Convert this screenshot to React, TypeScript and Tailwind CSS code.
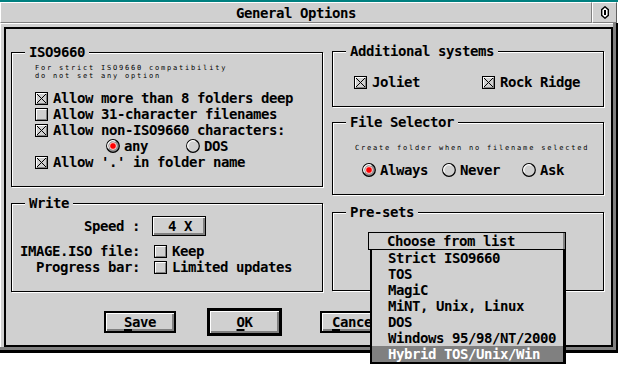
import type { ReactNode } from 'react'

function CheckBox({ checked }: { checked?: boolean }) {
  return (
    <svg width="13" height="13" viewBox="0 0 13 13" shapeRendering="crispEdges" className="shrink-0">
      <rect x="0.5" y="0.5" width="12" height="12" fill="#d0d0d0" stroke="#000" />
      <path d="M1.5 11V1.5H11" stroke="#fff" fill="none" />
      <path d="M2 11.5H11.5V2" stroke="#808080" fill="none" />
      {checked && <path d="M2 2L11 11M11 2L2 11" stroke="#000" shapeRendering="auto" />}
    </svg>
  )
}

function Radio({ on }: { on?: boolean }) {
  return (
    <svg width="14" height="14" viewBox="0 0 14 14" className="shrink-0">
      <circle cx="7" cy="7" r="6.3" fill={on ? '#909090' : '#d0d0d0'} stroke="#000" strokeWidth="1.2" />
      <path d="M2.6 9.5A5 5 0 0 1 9.5 2.6" stroke="#fff" strokeWidth="1.2" fill="none" />
      {on && <circle cx="7" cy="7" r="3.4" fill="#ff0000" stroke="#fff" strokeWidth="0.8" />}
    </svg>
  )
}

function Check({ checked, label, className = '' }: { checked?: boolean; label: string; className?: string }) {
  return (
    <div className={`flex h-[16px] items-center gap-[5px] whitespace-nowrap ${className}`}>
      <CheckBox checked={checked} />
      <span>{label}</span>
    </div>
  )
}

function RadioItem({ on, label, className = '' }: { on?: boolean; label: string; className?: string }) {
  return (
    <div className={`flex h-[16px] items-center gap-[4px] whitespace-nowrap ${className}`}>
      <Radio on={on} />
      <span>{label}</span>
    </div>
  )
}

function Frame({ title, className = '', children }: { title: string; className?: string; children?: ReactNode }) {
  return (
    <div className={`border border-black shadow-[1px_1px_0_#fff,inset_1px_1px_0_#fff] ${className}`}>
      <div className="-mt-[9px] ml-[13px] h-[16px] w-fit bg-[#d0d0d0] px-[4px]">{title}</div>
      {children}
    </div>
  )
}

function Key({ k, rest }: { k: string; rest: string }) {
  return (
    <span>
      <span className="underline decoration-2 underline-offset-[2px]">{k}</span>
      {rest}
    </span>
  )
}

const small = 'text-[7px] font-normal leading-[8px] tracking-[1.79px] whitespace-nowrap'

export default function App() {
  return (
    <div className="relative h-[365px] w-[618px] overflow-hidden bg-white font-['DejaVu_Sans_Mono',monospace] text-[14px] font-bold leading-[16px] tracking-[-0.43px] text-black">
      <div className="h-[2px] bg-[#008080]" />

      {/* title bar */}
      <div className="flex h-[21px]">
        <div className="flex w-[592px] items-center justify-center border border-t-white border-l-white border-b-[#808080] border-r-[#808080] bg-[#d0d0d0]">
          General Options
        </div>
        <div className="flex w-[25px] items-center justify-center border border-t-white border-l-white border-b-[#808080] border-r-[#606060] bg-[#d0d0d0]">
          <svg width="8" height="13" viewBox="0 0 8 13">
            <path d="M4 0.8L7.3 3.6V9.4L4 12.2L0.7 9.4V3.6Z" fill="#fff" stroke="#000" strokeWidth="1.4" />
            <rect x="3" y="4" width="2" height="5" fill="#000" />
          </svg>
        </div>
      </div>

      {/* window body */}
      <div className="h-[330px] w-[618px] border-r-2 border-b-[3px] border-black bg-[#808080]">
        <div className="h-[324px] w-[613px] border-t border-l border-white bg-[#d0d0d0] pt-[3px] pl-[3px]">
          <div className="h-[320px] w-[609px] border-2 border-black">
            <div className="flex h-[263px] gap-[9px] pl-[5px]">
              {/* left column */}
              <div className="flex w-[312px] flex-col gap-[16px] pt-[23px]">
                <Frame title="ISO9660" className="h-[135px]">
                  <div className="pl-[23px]">
                    <div className={`mt-[4px] ${small}`}>
                      For strict ISO9660 compatibility
                      <br />
                      do not set any option
                    </div>
                    <div className="mt-[10px]">
                      <Check checked label="Allow more than 8 folders deep" />
                      <Check label="Allow 31-character filenames" />
                      <Check checked label="Allow non-ISO9660 characters:" />
                      <div className="flex pl-[71px]">
                        <RadioItem on label="any" className="w-[80px]" />
                        <RadioItem label="DOS" />
                      </div>
                      <Check checked label="Allow '.' in folder name" />
                    </div>
                  </div>
                </Frame>

                <Frame title="Write" className="h-[89px]">
                  <div className="mt-[5px] pl-[7px] whitespace-nowrap">
                    <div className="flex h-[20px] items-center">
                      <span className="w-[121px] text-right">Speed :</span>
                      <button className="ml-[12px] h-[20px] w-[54px] border border-black bg-[#d0d0d0] pl-[2px] shadow-[inset_1px_1px_0_#fff,inset_-2px_-2px_0_#808080]">
                        4 X
                      </button>
                    </div>
                    <div className="mt-[7px] flex h-[16px] items-center">
                      <span className="w-[121px] text-right">IMAGE.ISO file:</span>
                      <Check label="Keep" className="ml-[14px]" />
                    </div>
                    <div className="flex h-[16px] items-center">
                      <span className="w-[121px] text-right">Progress bar:</span>
                      <Check label="Limited updates" className="ml-[14px]" />
                    </div>
                  </div>
                </Frame>
              </div>

              {/* right column */}
              <div className="flex w-[272px] flex-col pt-[22px]">
                <Frame title="Additional systems" className="h-[56px]">
                  <div className="mt-[15px] flex pl-[21px]">
                    <Check checked label="Joliet" className="w-[128px]" />
                    <Check checked label="Rock Ridge" />
                  </div>
                </Frame>

                <Frame title="File Selector" className="mt-[15px] h-[73px]">
                  <div className={`mt-[14px] pl-[22px] ${small}`}>Create folder when no filename selected</div>
                  <div className="mt-[10px] flex pl-[29px]">
                    <RadioItem on label="Always" className="w-[80px]" />
                    <RadioItem label="Never" className="w-[80px]" />
                    <RadioItem label="Ask" />
                  </div>
                </Frame>

                <Frame title="Pre-sets" className="mt-[17px] h-[79px]">
                  <div className="relative mt-[12px] ml-[35px] h-[18px] w-[198px] border border-black bg-[#d0d0d0] pl-[18px] shadow-[inset_-2px_0_0_#808080]">
                    Choose from list
                    <div className="absolute top-[17px] left-[1px] z-10 w-[196px] border-b-2 border-l-2 border-r-[3px] border-black bg-[#d0d0d0]">
                      {[
                        'Strict ISO9660',
                        'TOS',
                        'MagiC',
                        'MiNT, Unix, Linux',
                        'DOS',
                        'Windows 95/98/NT/2000',
                      ].map((item) => (
                        <div key={item} className="h-[16px] pl-[16px] whitespace-nowrap">
                          {item}
                        </div>
                      ))}
                      <div className="h-[16px] bg-[#808080] pl-[16px] whitespace-nowrap text-white">Hybrid TOS/Unix/Win</div>
                    </div>
                  </div>
                </Frame>
              </div>
            </div>

            {/* buttons */}
            <div className="mt-[16px] flex h-[28px] items-center pl-[98px]">
              <button className="h-[22px] w-[72px] border-2 border-black bg-[#d0d0d0] shadow-[inset_1px_1px_0_#fff,inset_-2px_-2px_0_#808080]">
                <Key k="S" rest="ave" />
              </button>
              <button className="ml-[31px] h-[28px] w-[75px] border-[3px] border-black bg-[#d0d0d0] shadow-[inset_1px_1px_0_#fff,inset_-2px_-2px_0_#808080]">
                <Key k="O" rest="K" />
              </button>
              <button className="ml-[38px] h-[22px] w-[72px] border-2 border-black bg-[#d0d0d0] shadow-[inset_1px_1px_0_#fff,inset_-2px_-2px_0_#808080]">
                <Key k="C" rest="ancel" />
              </button>
            </div>
          </div>
        </div>
      </div>
    </div>
  )
}
